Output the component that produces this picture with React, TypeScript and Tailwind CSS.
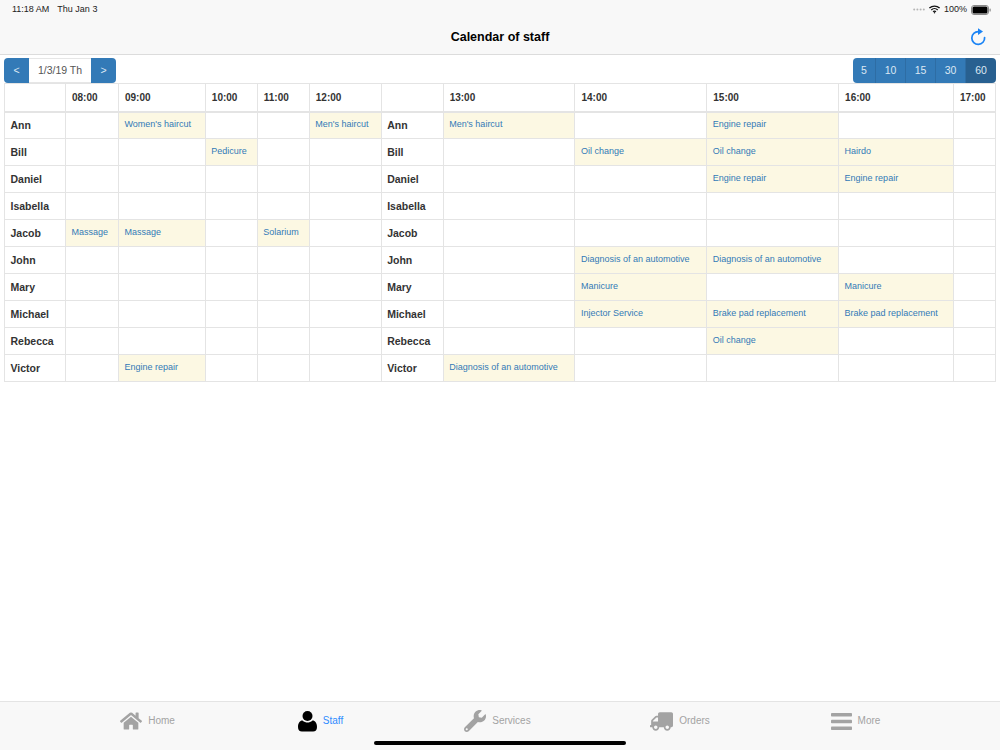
import React from "react";
import { FaHome, FaWrench, FaTruck } from "react-icons/fa";

const W = [61, 53, 87, 52, 52, 72, 62, 132, 132, 132, 115, 42];
const H = ["", "08:00", "09:00", "10:00", "11:00", "12:00", "", "13:00", "14:00", "15:00", "16:00", "17:00"];
type R = [string, Record<number, string>];
const D = "Diagnosis of an automotive";
const B = "Brake pad replacement";
const rows: R[] = [
  ["Ann", { 2: "Women's haircut", 5: "Men's haircut", 7: "Men's haircut", 9: "Engine repair" }],
  ["Bill", { 3: "Pedicure", 8: "Oil change", 9: "Oil change", 10: "Hairdo" }],
  ["Daniel", { 9: "Engine repair", 10: "Engine repair" }],
  ["Isabella", {}],
  ["Jacob", { 1: "Massage", 2: "Massage", 4: "Solarium" }],
  ["John", { 8: D, 9: D }],
  ["Mary", { 8: "Manicure", 10: "Manicure" }],
  ["Michael", { 8: "Injector Service", 9: B, 10: B }],
  ["Rebecca", { 9: "Oil change" }],
  ["Victor", { 2: "Engine repair", 7: D }],
];

function Cells({ r }: { r: R }) {
  return (
    <tr>
      {W.map((_, i) =>
        i === 0 || i === 6 ? (
          <td key={i} className="h-[27px] border border-[#e4e4e4] p-0 pl-[5.5px] pt-px text-[10.5px] font-bold text-[#333]">
            {r[0]}
          </td>
        ) : (
          <td key={i} className={`h-[27px] border border-[#e4e4e4] p-0 pl-[5.5px] pb-px align-middle text-[9px] text-[#337ab7] ${r[1][i] ? "bg-[#fcf8e3]" : ""}`}>
            {r[1][i] ?? ""}
          </td>
        )
      )}
    </tr>
  );
}

function Tab({ icon, label, active, w }: { icon: React.ReactNode; label: string; active?: boolean; w: string }) {
  return (
    <div className={`flex h-6 items-center justify-center gap-[6px] ${w}`}>
      {icon}
      <span className={`mb-px text-[10px] ${active ? "text-[#2f8cff]" : "text-[#a3a3a3]"}`}>{label}</span>
    </div>
  );
}

export default function App() {
  return (
    <div className="relative flex h-[750px] w-[1000px] flex-col overflow-hidden bg-white font-['Liberation_Sans',Arial,sans-serif]">
      <header className="h-[55px] shrink-0 border-b border-[#dcdcdc] bg-[#f8f8f8]">
        <div className="flex h-[19px] items-center justify-between pl-3 pr-[9px] text-[9px] text-[#222]">
          <div className="flex gap-2">
            <span>11:18 AM</span>
            <span>Thu Jan 3</span>
          </div>
          <div className="flex items-center gap-1">
            <svg width="12" height="3" viewBox="0 0 12 3" fill="#b5b5b5">
              <circle cx="1.2" cy="1.5" r="1" />
              <circle cx="4.4" cy="1.5" r="1" />
              <circle cx="7.6" cy="1.5" r="1" />
              <circle cx="10.8" cy="1.5" r="1" />
            </svg>
            <svg width="11" height="9" viewBox="0 0 24 18" fill="none" stroke="#111" strokeWidth="3">
              <path d="M1 6a16 16 0 0 1 22 0M5 10a10 10 0 0 1 14 0M9 14a4 4 0 0 1 6 0" />
              <circle cx="12" cy="16" r="1.5" fill="#111" stroke="none" />
            </svg>
            <span>100%</span>
            <svg width="20" height="10" viewBox="0 0 20 10">
              <rect x="0.5" y="0.5" width="17" height="9" rx="2.5" fill="none" stroke="#888" />
              <rect x="1.5" y="1.5" width="15" height="7" rx="1.5" fill="#000" />
              <rect x="18.5" y="3.5" width="1.2" height="3" rx="0.6" fill="#888" />
            </svg>
          </div>
        </div>
        <div className="relative flex h-[35px] items-center justify-center pt-[2px] text-[12.5px] font-bold text-black">
          Calendar of staff
          <svg className="absolute right-[14px] top-[9px]" width="16" height="18" viewBox="0 0 16 18" fill="none">
            <path d="M8.5 3.600A6.400 6.400 0 1 0 14.600 9.500" stroke="#1b84f5" strokeWidth="1.700" strokeLinecap="round" />
            <path d="M8 0.300 13 3.600 8 6.900Z" fill="#1b84f5" />
          </svg>
        </div>
      </header>

      <main className="flex-1 px-1">
        <div className="flex h-7 items-center justify-between pt-[3px]">
          <div className="flex h-[25px] text-[10.5px]">
            <span className="flex w-[25px] items-center justify-center rounded-l bg-[#337ab7] text-[#dce8f3]">&lt;</span>
            <span className="flex w-[62px] items-center justify-center border-y border-[#e6e6e6] bg-white text-[#555]">1/3/19 Th</span>
            <span className="flex w-[25px] items-center justify-center rounded-r bg-[#337ab7] text-[#dce8f3]">&gt;</span>
          </div>
          <div className="flex h-[25px] overflow-hidden rounded text-[10.5px] text-[#dce8f3]">
            {["5", "10", "15", "30"].map((n) => (
              <span key={n} className={`flex items-center justify-center border-r border-[#2e6da4] bg-[#337ab7] ${n === "5" ? "w-[23px]" : "w-[30px]"}`}>
                {n}
              </span>
            ))}
            <span className="flex w-[30px] items-center justify-center bg-[#286090]">60</span>
          </div>
        </div>

        <table className="table-fixed border-collapse">
          <colgroup>
            {W.map((w, i) => (
              <col key={i} style={{ width: w }} />
            ))}
          </colgroup>
          <thead>
            <tr>
              {H.map((h, i) => (
                <th key={i} className="h-[28px] border border-b-2 border-[#e4e4e4] p-0 pl-[6px] pt-px text-left text-[10px] font-bold text-[#333]">
                  {h}
                </th>
              ))}
            </tr>
          </thead>
          <tbody>
            {rows.map((r) => (
              <Cells key={r[0]} r={r} />
            ))}
          </tbody>
        </table>
      </main>

      <nav className="flex h-[49px] shrink-0 items-start border-t border-[#e4e4e4] bg-[#f8f8f8] pl-[61px] pt-[7px]">
        <Tab w="w-[173px]" label="Home" icon={<FaHome className="text-[#a3a3a3]" size={22} />} />
        <Tab
          w="w-[173px]"
          label="Staff"
          active
          icon={
            <svg width="19" height="21" viewBox="0 0 19 21" fill="#000">
              <circle cx="9.500" cy="5" r="5" />
              <path d="M0 16c0-4 2-6.500 4.500-6.500C6 11 8 11.500 9.500 11.500S13 11 14.500 9.500C17 9.500 19 12 19 16c0 3-1.500 4.500-4 4.500H4C1.500 20.500 0 19 0 16Z" />
            </svg>
          }
        />
        <Tab w="w-[181px]" label="Services" icon={<FaWrench className="text-[#a3a3a3]" size={22} />} />
        <Tab w="w-[184px]" label="Orders" icon={<FaTruck className="-scale-x-100 text-[#a3a3a3]" size={23} />} />
        <Tab
          w="w-[167px]"
          label="More"
          icon={
            <svg width="21" height="17" viewBox="0 0 21 17" fill="#a3a3a3">
              <rect width="21" height="3.600" rx="0.800" />
              <rect y="6.700" width="21" height="3.600" rx="0.800" />
              <rect y="13.400" width="21" height="3.600" rx="0.800" />
            </svg>
          }
        />
      </nav>
      <div className="absolute bottom-[5px] left-[374px] h-[4px] w-[252px] rounded-full bg-black" />
    </div>
  );
}
